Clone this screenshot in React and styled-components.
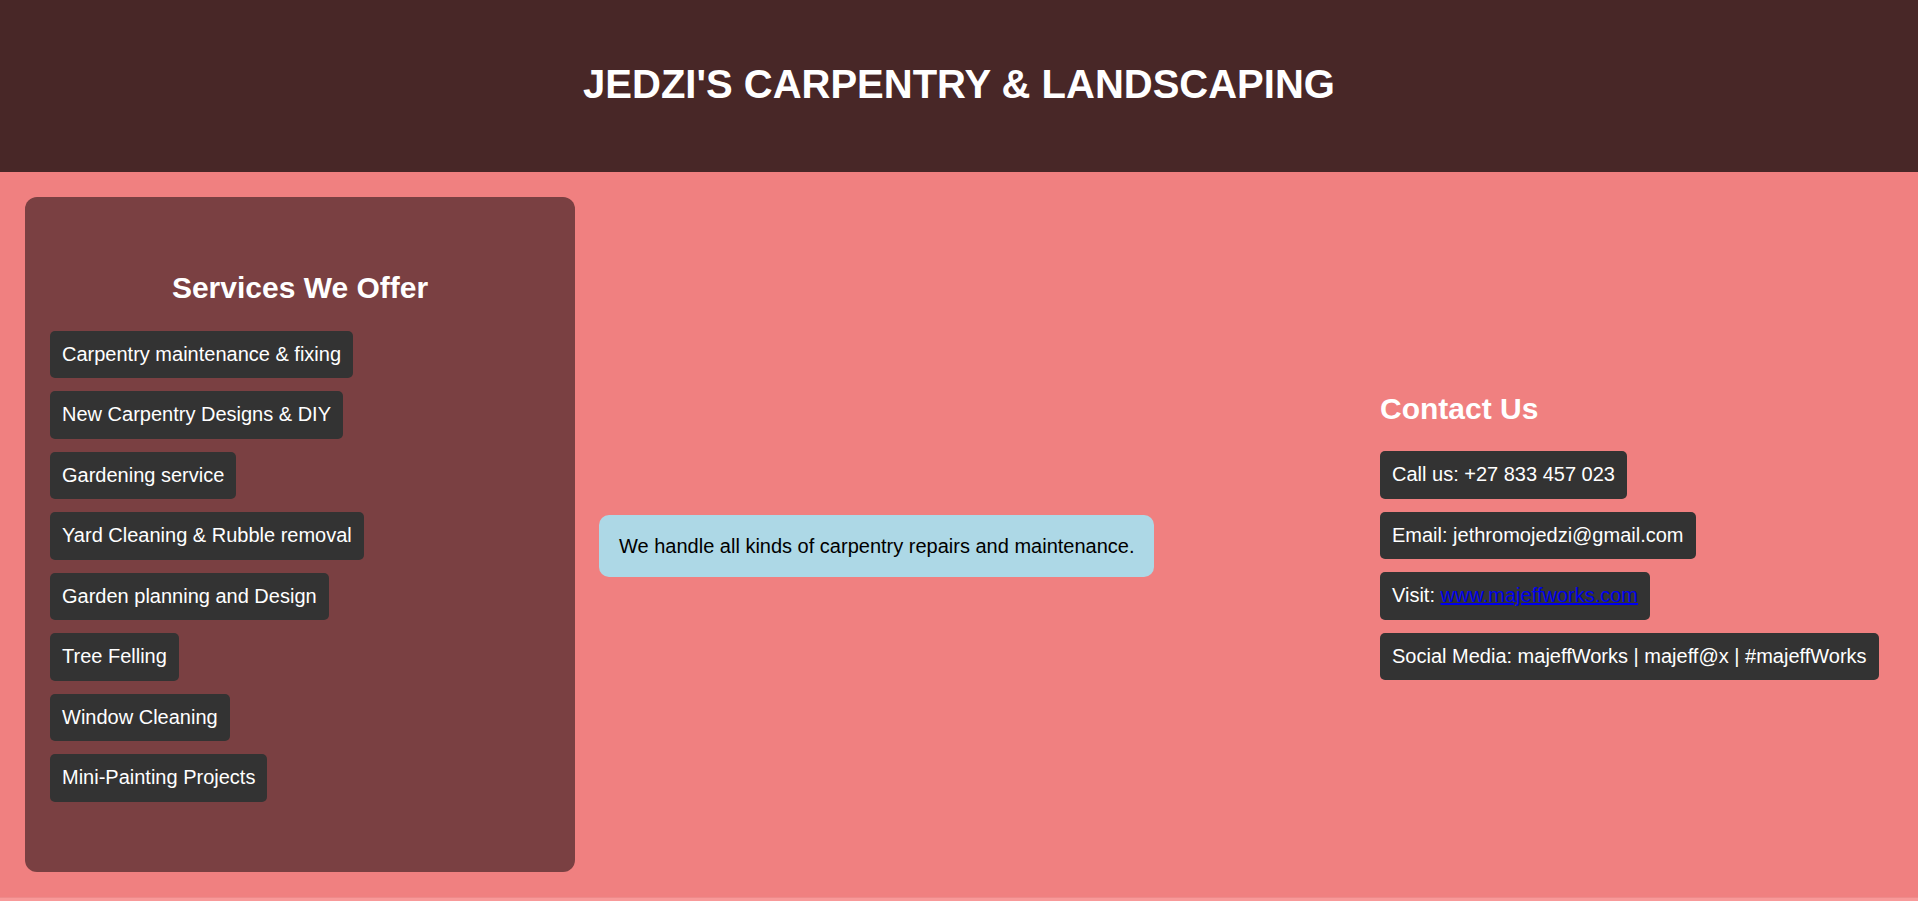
import React from "react";
import styled, { createGlobalStyle } from "styled-components";

const Global = createGlobalStyle`
  html, body { margin: 0; padding: 0; }
  body {
    font-family: "Liberation Sans", Arial, sans-serif;
    background: #f08080;
    overflow: hidden;
  }
  * { box-sizing: border-box; }
`;

const Header = styled.header`
  height: 172px;
  background: #482727;
  display: flex;
  align-items: center;
  justify-content: center;
`;

const Title = styled.h1`
  margin: 0;
  color: #fff;
  font-size: 40px;
  font-weight: 700;
  transform: translateY(-2px);
`;

const Main = styled.main`
  height: 725px;
  background: #f08080;
  padding: 25px 24px 25px 25px;
  display: grid;
  grid-template-columns: 550px 1fr 514px;
  column-gap: 24px;
`;

const Panel = styled.section`
  background: #7a4042;
  border-radius: 12px;
  padding: 25px;
  display: flex;
  flex-direction: column;
  justify-content: center;
`;

const Column = styled.section`
  display: flex;
  flex-direction: column;
  justify-content: center;
  align-items: flex-start;
`;

const Heading = styled.h2`
  margin: 0 0 ${(p) => p.$gap}px;
  color: #fff;
  font-size: 30px;
  line-height: ${(p) => p.$lh}px;
  font-weight: 700;
  text-align: ${(p) => (p.$center ? "center" : "left")};
  align-self: stretch;
`;

const List = styled.ul`
  list-style: none;
  margin: 0;
  padding: 0;
  display: flex;
  flex-direction: column;
  align-items: flex-start;
  gap: 13px;
`;

const Item = styled.li`
  background: #333333;
  color: #fff;
  font-size: 20px;
  line-height: 23px;
  padding: 12px 12px 12.5px;
  border-radius: 5px;
  white-space: nowrap;
`;

const Link = styled.a`
  color: #0000ee;
  text-decoration: underline;
`;

const Description = styled.p`
  margin: 23px 0 0;
  background: #add8e6;
  color: #000;
  font-size: 20px;
  line-height: 23px;
  padding: 19.5px 20px;
  border-radius: 10px;
  white-space: nowrap;
`;

const Footer = styled.footer`
  height: 4px;
  background: #f89999;
  border-top: 1px solid #ee8a8a;
`;

const services = [
  "Carpentry maintenance & fixing",
  "New Carpentry Designs & DIY",
  "Gardening service",
  "Yard Cleaning & Rubble removal",
  "Garden planning and Design",
  "Tree Felling",
  "Window Cleaning",
  "Mini-Painting Projects",
];

export default function App() {
  return (
    <>
      <Global />
      <Header>
        <Title>JEDZI'S CARPENTRY &amp; LANDSCAPING</Title>
      </Header>
      <Main>
        <Panel>
          <Heading $center $lh={40.5} $gap={22.5}>Services We Offer</Heading>
          <List>
            {services.map((s) => (
              <Item key={s}>{s}</Item>
            ))}
          </List>
        </Panel>
        <Column>
          <Description>We handle all kinds of carpentry repairs and maintenance.</Description>
        </Column>
        <Column>
          <Heading $lh={40.5} $gap={22}>Contact Us</Heading>
          <List>
            <Item>Call us: +27 833 457 023</Item>
            <Item>Email: jethromojedzi@gmail.com</Item>
            <Item>
              Visit: <Link href="#">www.majeffworks.com</Link>
            </Item>
            <Item>Social Media: majeffWorks | majeff@x | #majeffWorks</Item>
          </List>
        </Column>
      </Main>
      <Footer />
    </>
  );
}
